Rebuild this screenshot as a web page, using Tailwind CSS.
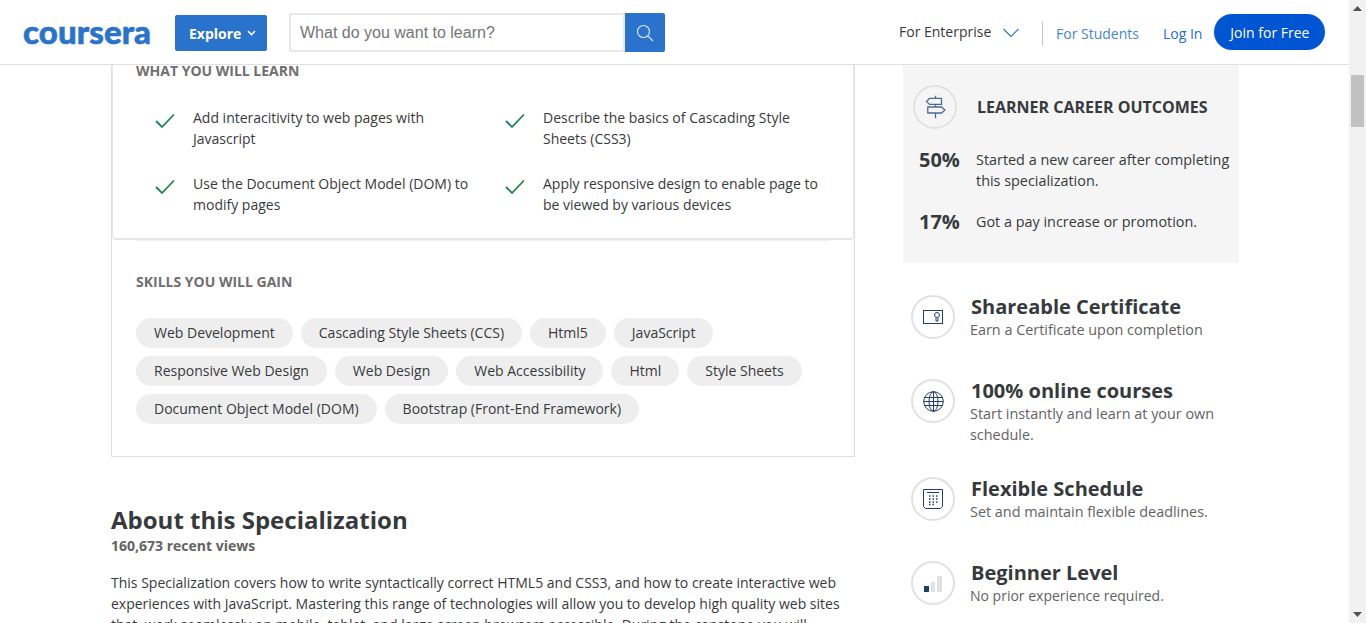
<!DOCTYPE html>
<html lang="en">
<head>
<meta charset="utf-8">
<title>Coursera</title>
<script src="https://cdn.jsdelivr.net/npm/@tailwindcss/browser@4"></script>
</head>
<body class="bg-white overflow-hidden">
<div class="flex h-[623px] w-[1366px] overflow-hidden font-['Open_Sans',sans-serif] text-sm leading-[21px] text-[#373a3c]">
  <div class="w-[1349px] h-full flex flex-col">
    <header class="h-[65px] shrink-0 border-b border-[#e0e0e0] pt-[2px] flex items-center bg-white relative z-10">
      <div class="ml-[23px] w-[132px] font-['Lato',sans-serif] font-black text-[33px] leading-none tracking-[0.1px] text-[#2a73cc] [-webkit-text-stroke:0.6px_#2a73cc] -mt-[3px]">coursera</div>
      <button class="ml-[20px] w-[92px] h-9 pl-[14px] rounded-[2px] bg-[#2a73cc] text-white font-bold flex items-center gap-[6px]">
        Explore
        <svg width="9" height="6" viewBox="0 0 9 6" fill="none" stroke="white" stroke-width="1.6"><path d="M1 1l3.5 3.5L8 1"/></svg>
      </button>
      <div class="ml-[22px] w-[336px] h-[39px] -mt-[1px] border-2 border-[#e8e8e8] rounded-l-[2px] flex items-center pl-[9px] pt-[1px] font-['Liberation_Sans',sans-serif] text-base text-[#757575]">What do you want to learn?</div>
      <div class="w-10 h-[39px] -mt-[1px] bg-[#2a73cc] rounded-r-[2px] flex items-center justify-center">
        <svg width="20" height="20" viewBox="0 0 20 20" fill="none" stroke="#d5e3f5" stroke-width="1.2"><circle cx="8.5" cy="8.5" r="6"/><path d="M13 13l5 5"/></svg>
      </div>
      <span class="ml-[234px] w-[92px] -mt-[4px] whitespace-nowrap">For Enterprise</span>
      <svg class="ml-[12px] -mt-[1px]" width="16" height="10" viewBox="0 0 16 10" fill="none" stroke="#2a73cc" stroke-width="1.1"><path d="M0.5 1l7.5 7.5L15.500 1"/></svg>
      <div class="ml-[23px] w-px h-[25px] bg-[#c8c8c8]"></div>
      <a class="ml-[13px] whitespace-nowrap text-[#2a73cc]/90">For Students</a>
      <a class="ml-[24px] whitespace-nowrap text-[#0056d2]/90">Log In</a>
      <button class="ml-[12px] w-[111px] h-9 -mt-[2px] rounded-full bg-[#0056d2] text-white">Join for Free</button>
    </header>
    <div class="flex-1 min-h-0 overflow-hidden flex items-start">
      <section class="ml-[111px] w-[744px] -mt-[5px] shrink-0">
        <div class="border-x border-b border-[#e0e0e0] pb-[32px]">
          <div class="rounded-b-[4px] border-b-2 border-[#e6e6e6] border-x border-x-[#e6e6e6] pl-[23px] h-[180px]">
            <h2 class="font-bold text-[#6f6f6f]">WHAT YOU WILL LEARN</h2>
            <ul class="mt-[26px] grid grid-cols-[350px_1fr] gap-y-[24px] pl-[19px]">
              <li class="flex">
                <svg class="mt-[6px] shrink-0" width="20" height="16" viewBox="0 0 20 16" fill="none" stroke="#1f8354" stroke-width="1.8"><path d="M1 8l6 6L19 1.500"/></svg>
                <span class="ml-[18px] w-[290px]">Add interacitivity to web pages with Javascript</span>
              </li>
              <li class="flex">
                <svg class="mt-[6px] shrink-0" width="20" height="16" viewBox="0 0 20 16" fill="none" stroke="#1f8354" stroke-width="1.8"><path d="M1 8l6 6L19 1.500"/></svg>
                <span class="ml-[18px] w-[280px]">Describe the basics of Cascading Style Sheets (CSS3)</span>
              </li>
              <li class="flex">
                <svg class="mt-[6px] shrink-0" width="20" height="16" viewBox="0 0 20 16" fill="none" stroke="#1f8354" stroke-width="1.8"><path d="M1 8l6 6L19 1.500"/></svg>
                <span class="ml-[18px] w-[290px]">Use the Document Object Model (DOM) to modify pages</span>
              </li>
              <li class="flex">
                <svg class="mt-[6px] shrink-0" width="20" height="16" viewBox="0 0 20 16" fill="none" stroke="#1f8354" stroke-width="1.8"><path d="M1 8l6 6L19 1.500"/></svg>
                <span class="ml-[18px] w-[280px]">Apply responsive design to enable page to be viewed by various devices</span>
              </li>
            </ul>
          </div>
          <div class="mx-[24px] h-px bg-[#f0f0f0]"></div>
          <div class="pl-[24px] pt-[30px]">
            <h2 class="font-bold text-[#6f6f6f]">SKILLS YOU WILL GAIN</h2>
            <div class="mt-[26px] flex flex-wrap gap-x-[8px] gap-y-2 w-[690px]">
              <span class="h-[30px] pb-[2px] px-[18px] rounded-full bg-[#eeeeee] flex items-center">Web Development</span>
              <span class="h-[30px] pb-[2px] px-[18px] rounded-full bg-[#eeeeee] flex items-center">Cascading Style Sheets (CCS)</span>
              <span class="h-[30px] pb-[2px] px-[18px] rounded-full bg-[#eeeeee] flex items-center">Html5</span>
              <span class="h-[30px] pb-[2px] px-[18px] rounded-full bg-[#eeeeee] flex items-center">JavaScript</span>
              <span class="h-[30px] pb-[2px] px-[18px] rounded-full bg-[#eeeeee] flex items-center">Responsive Web Design</span>
              <span class="h-[30px] pb-[2px] px-[18px] rounded-full bg-[#eeeeee] flex items-center">Web Design</span>
              <span class="h-[30px] pb-[2px] px-[18px] rounded-full bg-[#eeeeee] flex items-center">Web Accessibility</span>
              <span class="h-[30px] pb-[2px] px-[18px] rounded-full bg-[#eeeeee] flex items-center">Html</span>
              <span class="h-[30px] pb-[2px] px-[18px] rounded-full bg-[#eeeeee] flex items-center">Style Sheets</span>
              <span class="h-[30px] pb-[2px] px-[18px] rounded-full bg-[#eeeeee] flex items-center">Document Object Model (DOM)</span>
              <span class="h-[30px] pb-[2px] px-[18px] rounded-full bg-[#eeeeee] flex items-center">Bootstrap (Front-End Framework)</span>
            </div>
          </div>
        </div>
        <h1 class="mt-[45px] text-2xl leading-9 font-bold">About this Specialization</h1>
        <p class="-mt-[3px] font-bold text-[#636363]">160,673 recent views</p>
        <p class="mt-[16px]">This Specialization covers how to write syntactically correct HTML5 and CSS3, and how to create interactive web experiences with JavaScript. Mastering this range of technologies will allow you to develop high quality web sites that&nbsp; work seamlessly on mobile, tablet, and large screen browsers accessible. During the capstone you will develop a professional-quality web portfolio.</p>
      </section>
      <aside class="ml-[48px] w-[336px] shrink-0">
        <div class="bg-[#f5f5f5] h-[198px] pt-5">
          <div class="flex items-center pl-[10px]">
            <div class="w-11 h-11 rounded-full border-2 border-[#e1e1e1] flex items-center justify-center shrink-0">
              <svg width="21" height="24" viewBox="0 0 24 28" fill="none" stroke="#4a6a96" stroke-width="1.500"><path d="M12 1v3M12 11v3M12 21v6M5 4h14v7H5L1.500 7.500zM3 14h16l4 3.500-4 3.500H3z"/></svg>
            </div>
            <h3 class="ml-5 text-base font-bold">LEARNER CAREER OUTCOMES</h3>
          </div>
          <div class="mt-[20px] flex pl-4">
            <span class="w-[57px] shrink-0 text-xl leading-[42px] font-bold h-[42px] -mt-[10px]">50%</span>
            <span class="w-[260px] text-[14.4px]">Started a new career after completing this specialization.</span>
          </div>
          <div class="mt-[20px] flex pl-4">
            <span class="w-[57px] shrink-0 text-xl leading-[42px] font-bold h-[21px] -mt-[10px]">17%</span>
            <span class="w-[260px] text-[14.4px]">Got a pay increase or promotion.</span>
          </div>
        </div>
        <ul class="mt-[32px] pl-2">
          <li class="flex min-h-[52px] mb-8">
            <div class="w-11 h-11 rounded-full border-2 border-[#e1e1e1] flex items-center justify-center shrink-0">
              <svg width="20" height="14" viewBox="0 0 20 14" fill="none" stroke="#1f3f72" stroke-width="1"><rect x="0.500" y="0.500" width="19" height="13"/><circle cx="14" cy="5" r="2.500"/><path d="M13 8v3h2V8"/></svg>
            </div>
            <div class="ml-4">
              <h3 class="text-xl leading-6 font-bold">Shareable Certificate</h3>
              <p class="-ml-[1px] text-[#636363] text-[14.4px]">Earn a Certificate upon completion</p>
            </div>
          </li>
          <li class="flex min-h-[52px] mb-8">
            <div class="w-11 h-11 rounded-full border-2 border-[#e1e1e1] flex items-center justify-center shrink-0">
              <svg width="21" height="21" viewBox="0 0 21 21" fill="none" stroke="#1f3f72" stroke-width="1"><circle cx="10.500" cy="10.500" r="9.800"/><ellipse cx="10.500" cy="10.500" rx="4.500" ry="9.800"/><path d="M10.500 0.700v19.600M1.500 6.500h18M0.700 10.500h19.600M1.500 14.500h18"/></svg>
            </div>
            <div class="ml-4">
              <h3 class="text-xl leading-6 font-bold">100% online courses</h3>
              <p class="-ml-[1px] text-[#636363] text-[14.4px] w-[260px]">Start instantly and learn at your own schedule.</p>
            </div>
          </li>
          <li class="flex min-h-[52px] mb-8">
            <div class="w-11 h-11 rounded-full border-2 border-[#e1e1e1] flex items-center justify-center shrink-0">
              <svg width="20" height="20" viewBox="0 0 20 20" fill="none" stroke="#1f3f72" stroke-width="1"><path d="M0.500 0.500h19v17l-2 2h-15l-2-2z"/><path d="M4 3.500h12" /><path d="M6 7h1.500M9.500 7H11M13 7h1.500M6 10h1.500M9.500 10H11M13 10h1.500M6 13h1.500M9.500 13H11M13 13h1.500M6 15.500h1.500M9.500 15.500H11" stroke-width="1.500"/></svg>
            </div>
            <div class="ml-4">
              <h3 class="text-xl leading-6 font-bold">Flexible Schedule</h3>
              <p class="-ml-[1px] text-[#636363] text-[14.4px]">Set and maintain flexible deadlines.</p>
            </div>
          </li>
          <li class="flex min-h-[52px] mb-8">
            <div class="w-11 h-11 rounded-full border-2 border-[#e1e1e1] flex items-center justify-center shrink-0">
              <div class="flex items-end gap-[2px] h-4 mt-[1px]">
                <div class="w-[5px] h-[6px] bg-[#1f3f72]"></div>
                <div class="w-[4px] h-[10px] bg-[#dfe2e5]"></div>
                <div class="w-[5px] h-4 bg-[#dfe2e5]"></div>
              </div>
            </div>
            <div class="ml-4">
              <h3 class="text-xl leading-6 font-bold">Beginner Level</h3>
              <p class="-ml-[1px] text-[#636363]">No prior experience required.</p>
            </div>
          </li>
        </ul>
      </aside>
    </div>
  </div>
  <div class="w-[17px] h-full bg-[#f1f1f1] shrink-0 flex flex-col items-center justify-between">
    <div class="w-full">
      <div class="h-[17px] flex items-center justify-center">
        <svg width="9" height="5" viewBox="0 0 9 5" fill="#505050"><path d="M4.500 0L9 5H0z"/></svg>
      </div>
      <div class="mt-[58px] ml-[2px] w-[13px] h-[52px] bg-[#c1c1c1]"></div>
    </div>
    <div class="h-[17px] flex items-center justify-center">
      <svg width="9" height="5" viewBox="0 0 9 5" fill="#505050"><path d="M0 0h9L4.500 5z"/></svg>
    </div>
  </div>
</div>
</body>
</html>
